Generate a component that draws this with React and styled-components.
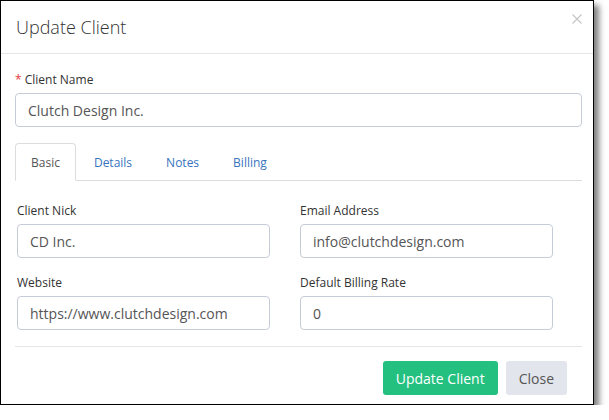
import React from 'react';
import styled, {createGlobalStyle} from 'styled-components';

const GlobalStyle = createGlobalStyle`
  body {
    margin: 0;
    background: #ffffff;
    font-family: "Open Sans", "Liberation Sans", sans-serif;
  }
  * {
    box-sizing: border-box;
  }
`;

const tabs = ['Basic', 'Details', 'Notes', 'Billing'];

const App = () => {
    return (
        <>
            <GlobalStyle/>
            <Modal>
                <Header>
                    <Title>Update Client</Title>
                    <CloseX aria-label="close">
                        <svg width="10" height="10" viewBox="0 0 10 10">
                            <path d="M0.5 0.5 L9.5 9.5 M9.5 0.5 L0.5 9.5" stroke="#c4c4c4" strokeWidth="1.1" fill="none"/>
                        </svg>
                    </CloseX>
                </Header>

                <Body>
                    <Label><Req>*</Req> Client Name</Label>
                    <Input defaultValue="Clutch Design Inc."/>

                    <TabBar>
                        {tabs.map((t, i) => (
                            <Tab key={t} $active={i === 0}>{t}</Tab>
                        ))}
                    </TabBar>

                    {/* Basic tab content */}
                    <FieldGrid>
                        <Field>
                            <Label>Client Nick</Label>
                            <Input defaultValue="CD Inc."/>
                        </Field>
                        <Field>
                            <Label>Email Address</Label>
                            <Input defaultValue="info@clutchdesign.com"/>
                        </Field>
                        <Field>
                            <Label>Website</Label>
                            <Input defaultValue="https://www.clutchdesign.com"/>
                        </Field>
                        <Field>
                            <Label>Default Billing Rate</Label>
                            <Input defaultValue="0"/>
                        </Field>
                    </FieldGrid>

                    <Divider/>

                    <Footer>
                        <Button $variant="primary">Update Client</Button>
                        <Button>Close</Button>
                    </Footer>
                </Body>
            </Modal>
        </>
    );
};

export default App;

const Modal = styled.div`
  width: 594px;
  border: 1px solid #000;
  background: #fff;
  box-shadow: 5px 5px 6px rgba(0, 0, 0, 0.5);
`;

const Header = styled.div`
  height: 53px;
  display: flex;
  align-items: center;
  justify-content: space-between;
  padding: 0 11px 0 15px;
  border-bottom: 1px solid #e5e5e5;
`;

const Title = styled.h4`
  margin: 0;
  font-size: 18px;
  font-weight: 300;
  color: #333;
  line-height: 24px;
`;

const CloseX = styled.button`
  align-self: flex-start;
  margin-top: 13px;
  padding: 0;
  border: none;
  background: none;
  width: 10px;
  height: 10px;
  line-height: 0;
  cursor: pointer;
`;

const Body = styled.div`
  padding: 17px 11px 9px 14px;
`;

const Label = styled.label`
  display: block;
  font-size: 12px;
  line-height: 17px;
  color: #333;
  margin-bottom: 5px;
`;

const Req = styled.span`
  color: #e2403a;
`;

const Input = styled.input`
  display: block;
  width: 100%;
  height: 34px;
  padding: 0 12px;
  border: 1px solid #c6ccd7;
  border-radius: 4px;
  font-family: "Open Sans", "Liberation Sans", sans-serif;
  font-size: 14px;
  color: #555;
  outline: none;
`;

const TabBar = styled.ul`
  display: flex;
  margin: 16px 0 0;
  padding: 0;
  list-style: none;
  height: 38px;
  border-bottom: 1px solid #dddddd;
`;

const Tab = styled.li`
  height: 38px;
  margin-right: 2px;
  padding: 0 15px;
  display: flex;
  align-items: center;
  font-size: 12px;
  border: 1px solid ${p => (p.$active ? '#dddddd' : 'transparent')};
  border-bottom-color: ${p => (p.$active ? '#fff' : 'transparent')};
  border-radius: 4px 4px 0 0;
  background: ${p => (p.$active ? '#fff' : 'transparent')};
  color: ${p => (p.$active ? '#555' : '#3874bd')};
  cursor: pointer;
`;

const FieldGrid = styled.div`
  display: grid;
  grid-template-columns: 253px 253px;
  column-gap: 30px;
  row-gap: 16px;
  padding: 21px 0 0 2px;
`;

const Field = styled.div`
  display: flex;
  flex-direction: column;
`;

const Divider = styled.hr`
  margin: 16px 0 14px;
  border: none;
  border-top: 1px solid #e5e5e5;
`;

const Footer = styled.div`
  display: flex;
  justify-content: flex-end;
  gap: 8px;
  padding-right: 15px;
`;

const Button = styled.button`
  height: 34px;
  padding: 0 13px;
  border: none;
  border-radius: 3px;
  font-family: "Open Sans", "Liberation Sans", sans-serif;
  font-size: 14px;
  background: ${p => (p.$variant === 'primary' ? '#24c07f' : '#e2e5eb')};
  color: ${p => (p.$variant === 'primary' ? '#fff' : '#555')};
  cursor: pointer;
`;
